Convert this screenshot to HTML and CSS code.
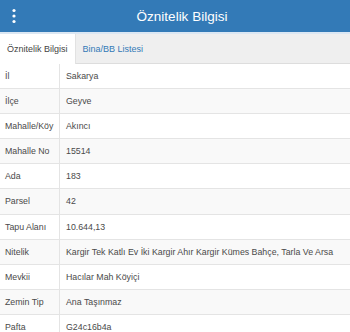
FILE: index.html
```html
<!DOCTYPE html>
<html lang="tr">
<head>
<meta charset="utf-8">
<link rel="stylesheet" href="styles.css">
</head>
<body>
<div class="header">
  <div class="menu">
    <svg width="6" height="16" viewBox="0 0 6 16"><circle cx="3" cy="2.5" r="1.6" fill="#fff"/><circle cx="3" cy="8" r="1.6" fill="#fff"/><circle cx="3" cy="13.5" r="1.6" fill="#fff"/></svg>
  </div>
  <div class="title">Öznitelik Bilgisi</div>
</div>
<div class="tabs">
  <div class="tab active">Öznitelik Bilgisi</div>
  <div class="tab">Bina/BB Listesi</div>
</div>
<table class="info">
  <tr><td class="k">İl</td><td>Sakarya</td></tr>
  <tr><td class="k">İlçe</td><td>Geyve</td></tr>
  <tr><td class="k">Mahalle/Köy</td><td>Akıncı</td></tr>
  <tr><td class="k">Mahalle No</td><td>15514</td></tr>
  <tr><td class="k">Ada</td><td>183</td></tr>
  <tr><td class="k">Parsel</td><td>42</td></tr>
  <tr><td class="k">Tapu Alanı</td><td>10.644,13</td></tr>
  <tr><td class="k">Nitelik</td><td>Kargir Tek Katlı Ev İki Kargir Ahır Kargir Kümes Bahçe, Tarla Ve Arsa</td></tr>
  <tr><td class="k">Mevkii</td><td>Hacılar Mah Köyiçi</td></tr>
  <tr><td class="k">Zemin Tip</td><td>Ana Taşınmaz</td></tr>
  <tr><td class="k">Pafta</td><td>G24c16b4a</td></tr>
</table>
</body>
</html>
```
FILE: styles.css
```css
html, body { margin: 0; padding: 0; background: #fff; }
body { font-family: "Liberation Sans", Arial, sans-serif; color: #333; width: 350px; overflow: hidden; }
.header {
  height: 32px;
  background: #337ab7;
  border-bottom: 2px solid #dbe7f3;
  display: flex;
  align-items: center;
}
.menu { width: 28px; display: flex; justify-content: center; align-items: center; }
.menu svg { display: block; }
.title {
  flex: 1;
  text-align: center;
  color: #fff;
  font-size: 13.5px;
  margin-right: 14px;
}
.tabs {
  display: flex;
  height: 29px;
  background: #efefef;
  border-bottom: 1px solid #ddd;
}
.tab {
  padding: 0 7px;
  font-size: 9px;
  line-height: 30px;
  color: #337ab7;
  height: 30px;
}
.tab.active {
  background: #fff;
  color: #444;
  border-right: 1px solid #e2e2e2;
}
.info {
  width: 100%;
  border-collapse: collapse;
  font-size: 8.8px;
}
.info td {
  padding: 6px 5px 6px 6px;
  line-height: 12.1px;
  border-bottom: 1px solid #e4e4e4;
  color: #4a4a4a;
  vertical-align: top;
}
.info td.k { width: 49px; padding-left: 5px; border-right: 1px solid #e4e4e4; }
.info tr:nth-child(even) td { background: #f9f9f9; }
```
